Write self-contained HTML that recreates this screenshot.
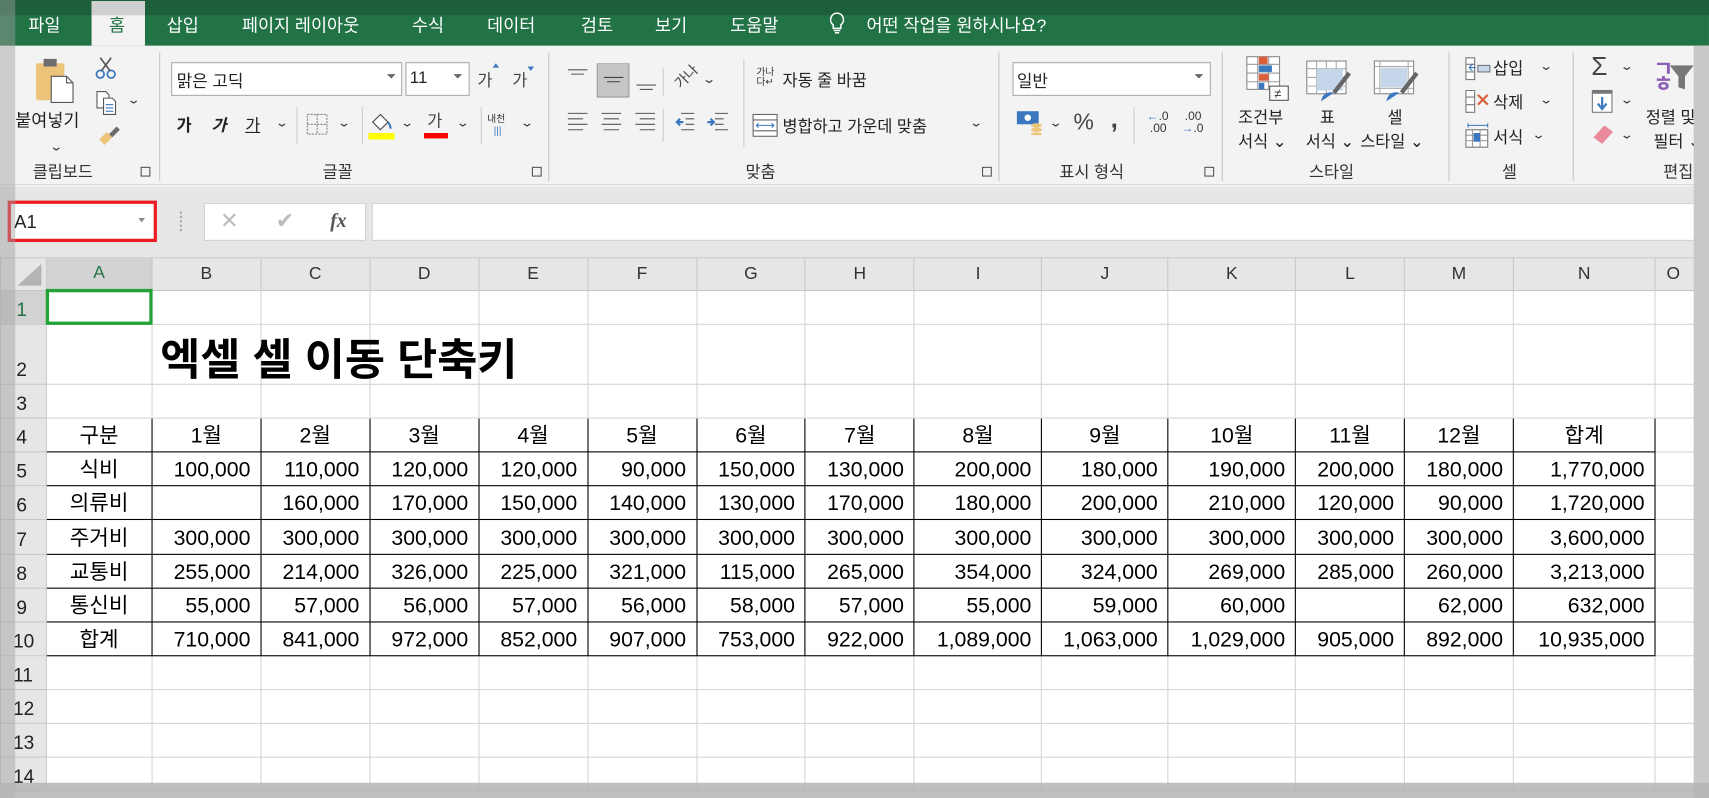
<!DOCTYPE html>
<html><head><meta charset="utf-8">
<style>
*{margin:0;padding:0;box-sizing:border-box}
html,body{width:1709px;height:798px;overflow:hidden;background:#fff}
body{font-family:"Liberation Sans","Noto Sans CJK KR",sans-serif;color:#222}
#w{position:absolute;left:0;top:0;width:1568px;height:732px;transform:scale(1.0899,1.0902);transform-origin:0 0;overflow:hidden}
.a{position:absolute;white-space:nowrap}
.tab{position:absolute;top:10px;font-size:16px;color:#fff}
.sep{position:absolute;top:48px;width:1px;height:118px;background:#c6c6c6}
.gl{position:absolute;top:147px;font-size:15px;color:#333}
.dl{position:absolute;top:153px;width:9px;height:9px;border:1px solid #555}
.chev{position:absolute;font-size:11px;color:#333;transform:scaleX(1.4)}
.rt{position:absolute;font-size:15px;color:#222}
table{position:absolute;left:0;top:236px;border-collapse:collapse;table-layout:fixed}
td{border:1px solid #d4d4d4;font-size:19.5px;line-height:22px;color:#000;padding:0 9px 3px 0;vertical-align:bottom;text-align:right;white-space:nowrap;overflow:hidden}
td.h{background:#e6e6e6;border:1px solid #c6c6c6;font-size:16px;color:#333;text-align:center;vertical-align:middle;padding:0}
td.r{background:#e6e6e6;border:1px solid #c6c6c6;font-size:17.5px;color:#222;text-align:left;padding:0 0 2px 14px;vertical-align:bottom}
td.b{border:1.6px solid #000}
td.c{text-align:center;padding-right:0}
tr{height:31px}
</style></head><body><div id="w">
<div class="a" style="left:0;top:0;width:1568px;height:42px;background:#217346"></div>
<div class="a" style="left:0;top:0;width:1568px;height:14px;background:#1d5f3b"></div>
<div class="a" style="left:84px;top:1px;width:49px;height:41px;background:#f3f3f3"></div>
<div class="a" style="left:84px;top:1px;width:49px;height:13px;background:#cfcfcf"></div>
<div class="tab" style="left:26px">파일</div>
<div class="tab" style="left:100px;color:#217346">홈</div>
<div class="tab" style="left:153px">삽입</div>
<div class="tab" style="left:222px">페이지 레이아웃</div>
<div class="tab" style="left:378px">수식</div>
<div class="tab" style="left:447px">데이터</div>
<div class="tab" style="left:533px">검토</div>
<div class="tab" style="left:601px">보기</div>
<div class="tab" style="left:670px">도움말</div>
<svg class="a" style="left:760px;top:10px" width="16" height="22" viewBox="0 0 16 22"><path d="M8 2a6 6 0 0 0-3.5 10.8V16h7v-3.2A6 6 0 0 0 8 2z M5 18h6 M6 20h4" fill="none" stroke="#fff" stroke-width="1.4"/></svg>
<div class="tab" style="left:795px">어떤 작업을 원하시나요?</div>
<div class="a" style="left:0;top:42px;width:1568px;height:128px;background:#f3f3f3;border-bottom:1px solid #d5d5d5"></div>
<svg class="a" style="left:28px;top:52px" width="44" height="44" viewBox="0 0 44 44"><rect x="5" y="6" width="26" height="34" rx="2" fill="#ecc47a"/><rect x="12" y="2" width="12" height="7" fill="#6d6d6d"/><path d="M19 18h14l6 6v18H19z" fill="#fff" stroke="#555"/><path d="M33 18v6h6" fill="none" stroke="#555"/></svg>
<div class="rt" style="left:14px;top:97px;font-size:16px">붙여넣기</div>
<div class="chev" style="left:47px;top:128px">⌄</div>
<svg class="a" style="left:86px;top:52px" width="24" height="22" viewBox="0 0 24 22"><circle cx="6" cy="16" r="3.5" fill="none" stroke="#3b78c0" stroke-width="1.6"/><circle cx="16" cy="16" r="3.5" fill="none" stroke="#3b78c0" stroke-width="1.6"/><path d="M7 13L16 1M15 13L6 1" stroke="#555" stroke-width="1.5"/></svg>
<svg class="a" style="left:87px;top:82px" width="24" height="24" viewBox="0 0 24 24"><path d="M2 2h8l3 3v12H2z" fill="#fff" stroke="#555"/><path d="M8 8h8l3 3v12H8z" fill="#fff" stroke="#555"/><path d="M10 14h7M10 17h7M10 20h7" stroke="#3b78c0"/></svg>
<div class="chev" style="left:118px;top:85px">⌄</div>
<svg class="a" style="left:88px;top:114px" width="24" height="24" viewBox="0 0 24 24"><path d="M3 14l7-7 5 5-7 7z" fill="#ecc47a"/><path d="M12 9l7-7 3 3-7 7z" fill="#6d6d6d"/></svg>
<div class="gl" style="left:30px">클립보드</div>
<div class="dl" style="left:129px"></div>
<div class="sep" style="left:146px"></div>
<div class="a" style="left:157px;top:57px;width:212px;height:31px;background:#fff;border:1px solid #ababab"></div>
<div class="rt" style="left:162px;top:63px;font-size:15.5px">맑은 고딕</div>
<div class="a" style="left:355px;top:68px;border:4px solid transparent;border-top-color:#666"></div>
<div class="a" style="left:372px;top:57px;width:59px;height:31px;background:#fff;border:1px solid #ababab"></div>
<div class="rt" style="left:376px;top:63px;font-size:15.5px">11</div>
<div class="a" style="left:416px;top:68px;border:4px solid transparent;border-top-color:#666"></div>
<div class="rt" style="left:438px;top:63px;color:#444">가</div>
<div class="a" style="left:452px;top:58px;border:3px solid transparent;border-bottom:4px solid #3b78c0;border-top:0"></div>
<div class="rt" style="left:470px;top:63px;color:#444">가</div>
<div class="a" style="left:484px;top:61px;border:3px solid transparent;border-top:4px solid #3b78c0;border-bottom:0"></div>
<div class="rt" style="left:162px;top:104px;font-weight:bold">가</div>
<div class="rt" style="left:194px;top:104px;font-weight:bold;font-style:italic">가</div>
<div class="rt" style="left:225px;top:104px;text-decoration:underline">가</div>
<div class="chev" style="left:254px;top:106px">⌄</div>
<div class="a" style="left:272px;top:98px;width:1px;height:34px;background:#ccc"></div>
<svg class="a" style="left:281px;top:104px" width="20" height="20" viewBox="0 0 20 20"><rect x="1" y="1" width="18" height="18" fill="none" stroke="#888" stroke-dasharray="2 1"/><path d="M10 1v18M1 10h18" stroke="#888" stroke-dasharray="2 1"/></svg>
<div class="chev" style="left:311px;top:106px">⌄</div>
<div class="a" style="left:332px;top:98px;width:1px;height:34px;background:#ccc"></div>
<svg class="a" style="left:338px;top:100px" width="24" height="28" viewBox="0 0 24 28"><path d="M4 12l7-7 7 7-7 7z" fill="#fff" stroke="#444"/><path d="M18 12q3 4 2 6" stroke="#3b78c0" stroke-width="2" fill="none"/><rect x="0" y="22" width="24" height="6" fill="#ff0"/></svg>
<div class="chev" style="left:369px;top:106px">⌄</div>
<div class="rt" style="left:392px;top:100px;color:#444">가</div>
<div class="a" style="left:389px;top:122px;width:22px;height:5px;background:#f00"></div>
<div class="chev" style="left:420px;top:106px">⌄</div>
<div class="a" style="left:441px;top:98px;width:1px;height:34px;background:#ccc"></div>
<div class="a" style="left:447px;top:102px;font-size:9px;color:#333">내천</div>
<div class="a" style="left:453px;top:115px;font-size:9px;color:#3b78c0">|||</div>
<div class="chev" style="left:479px;top:106px">⌄</div>
<div class="gl" style="left:296px">글꼴</div>
<div class="dl" style="left:488px"></div>
<div class="sep" style="left:503px"></div>
<svg class="a" style="left:519px;top:58px" width="90" height="32" viewBox="0 0 90 32"><path d="M2 6h18M5 10h12" stroke="#555"/><rect x="29" y="0" width="29" height="31" fill="#c6c6c6" stroke="#999"/><path d="M35 13h18M38 17h12" stroke="#444"/><path d="M65 20h18M68 24h12" stroke="#555"/></svg>
<div class="a" style="left:608px;top:62px;width:1px;height:26px;background:#ccc"></div>
<div class="a" style="left:617px;top:60px;font-size:13px;color:#444;transform:rotate(-45deg)">가나</div>
<div class="chev" style="left:646px;top:66px">⌄</div>
<svg class="a" style="left:519px;top:102px" width="150" height="22" viewBox="0 0 150 22"><g stroke="#555"><path d="M2 2h18M2 7h14M2 12h18M2 17h14"/><path d="M33 2h18M35 7h14M33 12h18M35 17h14"/><path d="M64 2h18M68 7h14M64 12h18M68 17h14"/></g><g stroke="#555"><path d="M106 2h12M110 7h8M110 12h8M106 17h12M137 2h12M137 7h8M137 12h8M137 17h12"/></g><path d="M108 10h-6m3-3l-3 3 3 3" stroke="#3b78c0" stroke-width="2" fill="none"/><path d="M130 10h6m-3-3l3 3-3 3" stroke="#3b78c0" stroke-width="2" fill="none"/></svg>
<div class="a" style="left:608px;top:100px;width:1px;height:30px;background:#ccc"></div>
<div class="a" style="left:682px;top:55px;width:1px;height:80px;background:#ccc"></div>
<div class="a" style="left:694px;top:62px;font-size:9px;color:#333;line-height:9px">가나<br>다↵</div>
<div class="rt" style="left:718px;top:63px">자동 줄 바꿈</div>
<svg class="a" style="left:690px;top:104px" width="24" height="22" viewBox="0 0 24 22"><rect x="1" y="1" width="22" height="20" fill="#fff" stroke="#666"/><path d="M1 6h22M1 16h22" stroke="#666"/><path d="M4 11h16M6 9l-2 2 2 2M18 9l2 2-2 2" stroke="#3b78c0" fill="none"/></svg>
<div class="rt" style="left:718px;top:105px">병합하고 가운데 맞춤</div>
<div class="chev" style="left:891px;top:106px">⌄</div>
<div class="gl" style="left:684px">맞춤</div>
<div class="dl" style="left:901px"></div>
<div class="sep" style="left:916px"></div>
<div class="a" style="left:929px;top:57px;width:182px;height:31px;background:#fff;border:1px solid #ababab"></div>
<div class="rt" style="left:933px;top:63px;font-size:15.5px">일반</div>
<div class="a" style="left:1096px;top:68px;border:4px solid transparent;border-top-color:#666"></div>
<svg class="a" style="left:932px;top:100px" width="26" height="24" viewBox="0 0 26 24"><rect x="1" y="2" width="20" height="12" fill="#3b78c0"/><circle cx="11" cy="8" r="3" fill="#fff"/><ellipse cx="19" cy="15" rx="5" ry="2" fill="#ecc47a"/><ellipse cx="19" cy="19" rx="5" ry="2" fill="#ecc47a"/><ellipse cx="19" cy="23" rx="5" ry="1.6" fill="#ecc47a"/></svg>
<div class="chev" style="left:964px;top:106px">⌄</div>
<div class="rt" style="left:985px;top:101px;font-size:21px;color:#444">%</div>
<div class="rt" style="left:1019px;top:96px;font-size:24px;font-weight:bold;color:#444">,</div>
<div class="a" style="left:1040px;top:98px;width:1px;height:34px;background:#ccc"></div>
<div class="a" style="left:1052px;top:102px;font-size:11px;line-height:11px;color:#333"><span style="color:#3b78c0;font-weight:bold">←</span>.0<br>&nbsp;.00</div>
<div class="a" style="left:1084px;top:102px;font-size:11px;line-height:11px;color:#333">&nbsp;.00<br><span style="color:#3b78c0;font-weight:bold">→</span>.0</div>
<div class="gl" style="left:972px">표시 형식</div>
<div class="dl" style="left:1105px"></div>
<div class="sep" style="left:1121px"></div>
<svg class="a" style="left:1143px;top:51px" width="40" height="42" viewBox="0 0 40 42"><rect x="1" y="1" width="30" height="30" fill="#fff" stroke="#888"/><path d="M1 8h30M1 16h30M1 24h30M11 1v30M21 1v30" stroke="#999"/><rect x="12" y="1" width="8" height="7" fill="#d9603b"/><rect x="12" y="9" width="12" height="6" fill="#3b78c0"/><rect x="12" y="17" width="9" height="6" fill="#d9603b"/><rect x="12" y="25" width="5" height="6" fill="#3b78c0"/><rect x="22" y="28" width="17" height="13" fill="#fff" stroke="#555"/><text x="26" y="39" font-size="12" fill="#333">≠</text></svg>
<div class="rt" style="left:1136px;top:97px">조건부</div>
<div class="rt" style="left:1136px;top:119px">서식 ⌄</div>
<svg class="a" style="left:1198px;top:55px" width="44" height="40" viewBox="0 0 44 40"><rect x="1" y="1" width="36" height="30" fill="#fff" stroke="#888"/><path d="M1 8h36M1 16h36M1 24h36M10 1v30M19 1v30M28 1v30" stroke="#aaa"/><rect x="10" y="8" width="24" height="20" fill="#c5d6ea"/><path d="M40 12l-14 18" stroke="#666" stroke-width="4"/><path d="M14 38q2-10 12-8z" fill="#3b78c0"/></svg>
<div class="rt" style="left:1211px;top:97px">표</div>
<div class="rt" style="left:1198px;top:119px">서식 ⌄</div>
<svg class="a" style="left:1260px;top:55px" width="44" height="40" viewBox="0 0 44 40"><rect x="1" y="1" width="36" height="30" fill="#fff" stroke="#888"/><path d="M1 6h36M1 26h36M6 1v30M32 1v30" stroke="#aaa"/><rect x="7" y="7" width="24" height="18" fill="#c5d6ea"/><path d="M40 12l-14 18" stroke="#666" stroke-width="4"/><path d="M12 38q2-10 12-8z" fill="#3b78c0"/></svg>
<div class="rt" style="left:1273px;top:97px">셀</div>
<div class="rt" style="left:1248px;top:119px">스타일 ⌄</div>
<div class="gl" style="left:1201px">스타일</div>
<div class="sep" style="left:1329px"></div>
<svg class="a" style="left:1344px;top:52px" width="24" height="22" viewBox="0 0 24 22"><path d="M1 1h8v20H1zM1 7h8M1 14h8" fill="#fff" stroke="#777"/><rect x="12" y="8" width="11" height="6" fill="#c5d6ea" stroke="#777"/><path d="M4 10h6m-3-3l-3 3 3 3" stroke="#3b78c0" fill="none"/></svg>
<div class="rt" style="left:1370px;top:52px">삽입</div><div class="chev" style="left:1414px;top:54px">⌄</div>
<svg class="a" style="left:1344px;top:82px" width="24" height="22" viewBox="0 0 24 22"><path d="M1 1h8v20H1zM1 7h8M1 14h8" fill="#fff" stroke="#777"/><path d="M12 5l9 9M21 5l-9 9" stroke="#d9603b" stroke-width="2"/></svg>
<div class="rt" style="left:1370px;top:83px">삭제</div><div class="chev" style="left:1414px;top:85px">⌄</div>
<svg class="a" style="left:1344px;top:112px" width="24" height="24" viewBox="0 0 24 24"><path d="M3 3h18M3 1v4M21 1v4" stroke="#3b78c0"/><rect x="1" y="7" width="20" height="16" fill="#fff" stroke="#777"/><path d="M1 12h20M1 17h20M7 7v16M14 7v16" stroke="#999"/><rect x="8" y="10" width="6" height="8" fill="#3b78c0"/></svg>
<div class="rt" style="left:1370px;top:115px">서식</div><div class="chev" style="left:1407px;top:117px">⌄</div>
<div class="gl" style="left:1378px">셀</div>
<div class="sep" style="left:1443px"></div>
<div class="rt" style="left:1460px;top:48px;font-size:24px;color:#444">Σ</div><div class="chev" style="left:1488px;top:54px">⌄</div>
<svg class="a" style="left:1460px;top:82px" width="20" height="22" viewBox="0 0 20 22"><rect x="1" y="1" width="18" height="20" fill="#fff" stroke="#777"/><rect x="1" y="1" width="18" height="3" fill="#777"/><path d="M10 7v11M6 13l4 5 4-5" stroke="#3b78c0" stroke-width="2" fill="none"/></svg>
<div class="chev" style="left:1488px;top:85px">⌄</div>
<svg class="a" style="left:1460px;top:112px" width="24" height="22" viewBox="0 0 24 22"><path d="M2 14l10-11 8 6-10 11z" fill="#e98a9a"/></svg>
<div class="chev" style="left:1488px;top:117px">⌄</div>
<div class="a" style="left:1517px;top:54px;font-size:20px;font-weight:bold;color:#8a5fb8;line-height:20px">ㄱ<br><span style="position:relative;top:-6px">ㅎ</span></div>
<svg class="a" style="left:1532px;top:58px" width="22" height="30" viewBox="0 0 22 30"><path d="M0 2h22l-8 10v12l-6-2V12z" fill="#777"/></svg>
<div class="rt" style="left:1510px;top:97px">정렬 및</div>
<div class="rt" style="left:1517px;top:119px">필터 ⌄</div>
<div class="gl" style="left:1526px">편집</div>
<div class="a" style="left:0;top:171px;width:1568px;height:65px;background:#e6e6e6"></div>
<div class="a" style="left:7px;top:184px;width:137px;height:38px;background:#fff;border:3px solid #ed1c24"></div>
<div class="rt" style="left:13px;top:194px;font-size:17px;color:#222">A1</div>
<div class="a" style="left:127px;top:200px;border:3px solid transparent;border-top:4px solid #888"></div>
<div class="a" style="left:165px;top:194px;width:2px;height:18px;border-left:2px dotted #aaa"></div>
<div class="a" style="left:187px;top:186px;width:149px;height:35px;background:#fff;border:1px solid #d0d0d0"></div>
<div class="rt" style="left:202px;top:190px;font-size:20px;color:#bbb">✕</div>
<div class="rt" style="left:253px;top:190px;font-size:20px;color:#bbb">✔</div>
<div class="a" style="left:303px;top:192px;font-family:'Liberation Serif',serif;font-style:italic;font-weight:bold;font-size:18px;color:#555">fx</div>
<div class="a" style="left:341px;top:186px;width:1227px;height:35px;background:#fff;border:1px solid #d0d0d0"></div>
<table>
<colgroup><col style="width:42px"><col style="width:97px"><col style="width:100px"><col style="width:100px"><col style="width:100px"><col style="width:100px"><col style="width:100px"><col style="width:100px"><col style="width:100px"><col style="width:117px"><col style="width:116px"><col style="width:117px"><col style="width:100px"><col style="width:100px"><col style="width:130px"><col style="width:49px"></colgroup>
<tr style="height:30px"><td class="h"></td><td class="h" style="background:#d2d2d2;color:#217346;border-bottom:2px solid #217346">A</td><td class="h">B</td><td class="h">C</td><td class="h">D</td><td class="h">E</td><td class="h">F</td><td class="h">G</td><td class="h">H</td><td class="h">I</td><td class="h">J</td><td class="h">K</td><td class="h">L</td><td class="h">M</td><td class="h">N</td><td class="h" style="text-align:left;padding-left:10px">O</td></tr>
<tr><td class="r" style="background:#d2d2d2;color:#217346">1</td><td></td><td></td><td></td><td></td><td></td><td></td><td></td><td></td><td></td><td></td><td></td><td></td><td></td><td></td><td></td></tr>
<tr style="height:55px"><td class="r">2</td><td></td><td></td><td></td><td></td><td></td><td></td><td></td><td></td><td></td><td></td><td></td><td></td><td></td><td></td><td></td></tr>
<tr><td class="r">3</td><td></td><td></td><td></td><td></td><td></td><td></td><td></td><td></td><td></td><td></td><td></td><td></td><td></td><td></td><td></td></tr>
<tr><td class="r">4</td><td class="b c">구분</td><td class="b c">1월</td><td class="b c">2월</td><td class="b c">3월</td><td class="b c">4월</td><td class="b c">5월</td><td class="b c">6월</td><td class="b c">7월</td><td class="b c">8월</td><td class="b c">9월</td><td class="b c">10월</td><td class="b c">11월</td><td class="b c">12월</td><td class="b c">합계</td><td></td></tr>
<tr><td class="r">5</td><td class="b c">식비</td><td class="b">100,000</td><td class="b">110,000</td><td class="b">120,000</td><td class="b">120,000</td><td class="b">90,000</td><td class="b">150,000</td><td class="b">130,000</td><td class="b">200,000</td><td class="b">180,000</td><td class="b">190,000</td><td class="b">200,000</td><td class="b">180,000</td><td class="b">1,770,000</td><td></td></tr>
<tr><td class="r">6</td><td class="b c">의류비</td><td class="b"></td><td class="b">160,000</td><td class="b">170,000</td><td class="b">150,000</td><td class="b">140,000</td><td class="b">130,000</td><td class="b">170,000</td><td class="b">180,000</td><td class="b">200,000</td><td class="b">210,000</td><td class="b">120,000</td><td class="b">90,000</td><td class="b">1,720,000</td><td></td></tr>
<tr style="height:32px"><td class="r">7</td><td class="b c">주거비</td><td class="b">300,000</td><td class="b">300,000</td><td class="b">300,000</td><td class="b">300,000</td><td class="b">300,000</td><td class="b">300,000</td><td class="b">300,000</td><td class="b">300,000</td><td class="b">300,000</td><td class="b">300,000</td><td class="b">300,000</td><td class="b">300,000</td><td class="b">3,600,000</td><td></td></tr>
<tr><td class="r">8</td><td class="b c">교통비</td><td class="b">255,000</td><td class="b">214,000</td><td class="b">326,000</td><td class="b">225,000</td><td class="b">321,000</td><td class="b">115,000</td><td class="b">265,000</td><td class="b">354,000</td><td class="b">324,000</td><td class="b">269,000</td><td class="b">285,000</td><td class="b">260,000</td><td class="b">3,213,000</td><td></td></tr>
<tr><td class="r">9</td><td class="b c">통신비</td><td class="b">55,000</td><td class="b">57,000</td><td class="b">56,000</td><td class="b">57,000</td><td class="b">56,000</td><td class="b">58,000</td><td class="b">57,000</td><td class="b">55,000</td><td class="b">59,000</td><td class="b">60,000</td><td class="b"></td><td class="b">62,000</td><td class="b">632,000</td><td></td></tr>
<tr><td class="r" style="padding-left:11px">10</td><td class="b c">합계</td><td class="b">710,000</td><td class="b">841,000</td><td class="b">972,000</td><td class="b">852,000</td><td class="b">907,000</td><td class="b">753,000</td><td class="b">922,000</td><td class="b">1,089,000</td><td class="b">1,063,000</td><td class="b">1,029,000</td><td class="b">905,000</td><td class="b">892,000</td><td class="b">10,935,000</td><td></td></tr>
<tr><td class="r" style="padding-left:11px">11</td><td></td><td></td><td></td><td></td><td></td><td></td><td></td><td></td><td></td><td></td><td></td><td></td><td></td><td></td><td></td></tr>
<tr><td class="r" style="padding-left:11px">12</td><td></td><td></td><td></td><td></td><td></td><td></td><td></td><td></td><td></td><td></td><td></td><td></td><td></td><td></td><td></td></tr>
<tr><td class="r" style="padding-left:11px">13</td><td></td><td></td><td></td><td></td><td></td><td></td><td></td><td></td><td></td><td></td><td></td><td></td><td></td><td></td><td></td></tr>
<tr><td class="r" style="padding-left:11px">14</td><td></td><td></td><td></td><td></td><td></td><td></td><td></td><td></td><td></td><td></td><td></td><td></td><td></td><td></td><td></td></tr>
</table>
<svg class="a" style="left:14px;top:240px" width="26" height="24" viewBox="0 0 26 24"><path d="M24 2v20H2z" fill="#b4b4b4"/></svg>
<div class="a" style="left:42px;top:265px;width:98px;height:33px;border:3px solid #21a336"></div>
<div class="a" style="left:147px;top:298px;font-size:40px;font-weight:bold;color:#000">엑셀 셀 이동 단축키</div>
<div class="a" style="left:0;top:0;width:14px;height:732px;background:rgba(160,160,160,0.45)"></div>
<div class="a" style="left:1554px;top:42px;width:14px;height:690px;background:#c8c8c8"></div>
<div class="a" style="left:0;top:718px;width:1568px;height:14px;background:rgba(180,180,180,0.85)"></div>
</div></body></html>
